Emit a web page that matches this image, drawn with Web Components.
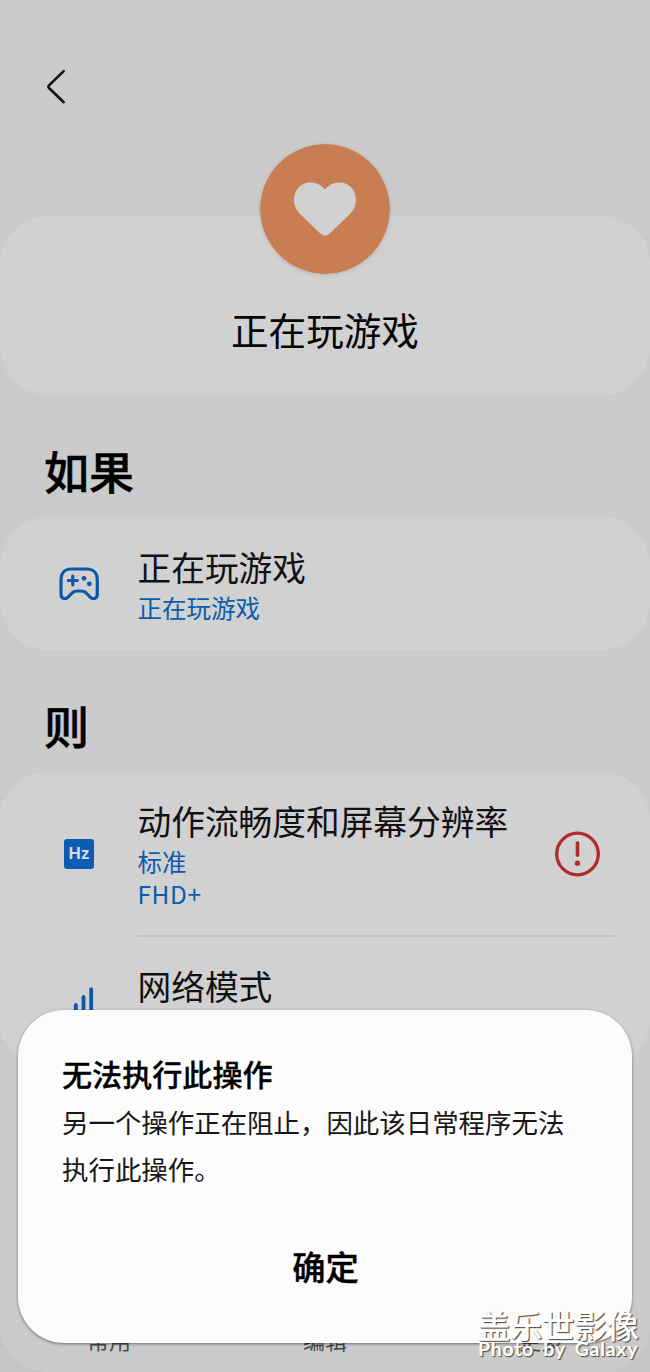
<!DOCTYPE html>
<html lang="zh-CN">
<head>
<meta charset="utf-8">
<title>日常程序</title>
<style>
html,body{margin:0;padding:0}
body{width:650px;height:1372px;overflow:hidden;background:#cbcbcb;color:#080808;font-family:"Noto Sans CJK SC",sans-serif}
</style>
</head>
<body>
<routine-screen></routine-screen>
<script>
const define = (name, html) => customElements.define(name, class extends HTMLElement {
  constructor() {
    super();
    this.attachShadow({ mode: 'open' }).innerHTML = html;
  }
});

define('back-bar', `<style>
:host{display:flex;align-items:center;height:174px;padding-left:45px;box-sizing:border-box}
svg{display:block}
</style><svg width="22" height="36" viewBox="0 0 22 36" fill="none" stroke="#111" stroke-width="2.6" stroke-linecap="round" stroke-linejoin="round"><path d="M18.7 2.1 4 16.4Q2.8 17.8 4 19L18.7 33.2"/></svg>`);

define('routine-hero', `<style>
:host{display:flex;flex-direction:column;align-items:center;height:179px;margin-top:42px;border-radius:48px;background:#d1d1d1}
svg{display:block;margin-top:-72px;border-radius:50%;box-shadow:0 1px 4px #0002;flex:none}
.name{margin-top:28px;font-size:37.6px;line-height:54px;color:#050505}
</style><svg width="130" height="130" viewBox="0 0 130 130"><circle cx="65" cy="65" r="65" fill="#c97d53"/><path d="M65 45.5C60 39.5 55.5 38.5 50.5 38.5C41 38.5 34 46 34 55.8C34 62 36.5 66.5 41 71L59.5 88.8Q65 94.5 70.5 88.8L89 71C93.5 66.5 96 62 96 55.8C96 46 89 38.5 79.5 38.5C74.5 38.5 70 39.5 65 45.5Z" fill="#d1d1d1"/></svg><div class="name"><slot></slot></div>`);

define('section-title', `<style>
:host{display:block;height:122px;padding:44px 0 0 44px;box-sizing:border-box;font-size:45px;line-height:64px;font-weight:500;color:#000;-webkit-text-stroke:.5px #000}
</style><slot></slot>`);

define('routine-card', `<style>
:host{display:block;background:#d1d1d1;border-radius:48px;overflow:hidden}
</style><slot></slot>`);

define('routine-item', `<style>
:host{display:grid;grid-template-columns:137.5px 1fr 95.5px;align-items:center;height:133px;box-sizing:border-box}
.icon{display:flex;padding-left:59px}
.copy{margin-top:-1px}
.title{font-size:33.7px;line-height:48px;color:#111;white-space:nowrap}
.sub{padding-top:1px;font-size:24.5px;line-height:31.5px;color:#0b5cad}
</style><div class="icon"><slot name="icon"></slot></div><div class="copy"><div class="title"><slot></slot></div><div class="sub"><slot name="sub"></slot></div></div><slot name="end"></slot>`);

define('item-divider', `<style>
:host{display:block;height:2px;margin:0 35px 0 137px;background:#bfbfbf}
</style>`);

define('gamepad-icon', `<style>:host,svg{display:block}</style><svg width="40" height="33" viewBox="0 0 40 33" fill="none" stroke="#0b58a8" stroke-width="3.2" stroke-linejoin="round" stroke-linecap="round"><path d="M12 2H28C34.5 2 38.3 6.5 38.3 13V27C38.3 32 33.7 33 30.8 29.8L28 26.7Q25.6 24 22 24H18.4Q14.7 24 12.3 26.7L9.5 29.8C6.6 33 2 32 2 27V13C2 6.5 5.5 2 12 2Z"/><path d="M9.3 13.5H18.3M13.8 9V18"/><g fill="#0b58a8" stroke="none"><circle cx="25" cy="11.3" r="2.4"/><circle cx="30.3" cy="16.8" r="2.4"/></g></svg>`);

define('hz-icon', `<style>
:host{display:flex;align-items:center;justify-content:center;width:30px;height:30px;margin-left:5px;border-radius:3px;background:#0a5cb5;color:#d9dde2;font:700 17px/30px "Liberation Sans",sans-serif}
</style><span>Hz</span>`);

define('signal-icon', `<style>:host{display:block;margin-left:7px}svg{display:block}</style><svg width="30" height="32" viewBox="0 0 30 32" fill="none" stroke="#0b58a8" stroke-width="3.8" stroke-linecap="round"><path d="M2 26V29M9.8 18V29M17.5 10V29M25.2 2.2V29"/></svg>`);

define('alert-icon', `<style>:host,svg{display:block}</style><svg width="46" height="46" viewBox="0 0 46 46" fill="none" stroke="#b02c2b"><circle cx="22.5" cy="23" r="20.8" stroke-width="3.3"/><path d="M22.5 12V24.2" stroke="#a82c2a" stroke-width="3.6" stroke-linecap="round"/><circle cx="22.5" cy="32.2" r="2.6" fill="#a82c2a" stroke="none"/></svg>`);

define('bottom-bar', `<style>
:host{display:grid;grid-template-columns:repeat(3,216px);justify-content:center;align-items:end;height:100px;box-sizing:border-box;padding-bottom:17px;font-size:22px;line-height:32px;color:#484848;text-align:center}
</style><span>常用</span><span>编辑</span><span>更多</span>`);

define('alert-dialog', `<style>
:host{position:absolute;left:18px;top:1009.5px;width:614px;height:333.5px;box-sizing:border-box;padding:41.5px 43px 0 44px;border-radius:46px;background:#fcfcfc;box-shadow:0 1px 3px #0007}
.title{font-size:30.1px;line-height:44px;font-weight:500;color:#000;-webkit-text-stroke:.3px #000}
.text{margin-top:3px;font-size:26.45px;line-height:47px;color:#171717}
.ok{display:block;width:100%;margin:47px 0 0;padding:0;border:0;background:none;font:500 33.3px/54px "Noto Sans CJK SC",sans-serif;color:#000;-webkit-text-stroke:.4px #000}
</style><div class="title">无法执行此操作</div><div class="text">另一个操作正在阻止，因此该日常程序无法<br>执行此操作。</div><button class="ok">确定</button>`);

define('photo-mark', `<style>
:host{position:absolute;left:478px;top:1305px;width:162px;color:#fff;text-shadow:1px 1px 1px #555,1px 1px 1px #888;white-space:nowrap}
.cn{font-size:32.2px;line-height:38px;font-weight:500}
.en{margin-top:-4px;font:700 19.5px/20px Lato,sans-serif;letter-spacing:.7px;word-spacing:4px}
</style><div class="cn">盖乐世影像</div><div class="en">Photo by Galaxy</div>`);

define('routine-screen', `<style>
:host{display:block;position:relative;width:650px;height:1372px;overflow:hidden;background:#c5c5c5}
main{display:flex;flex-direction:column;height:1372px;background:#cbcbcb;border-radius:0 0 48px 48px}
.then{height:296px}
.then routine-item:first-child{height:163px}
.then routine-item:last-child{height:131px}
.latin{letter-spacing:.6px}
bottom-bar{margin-top:auto}
</style><main>
<back-bar></back-bar>
<routine-hero>正在玩游戏</routine-hero>
<section-title>如果</section-title>
<routine-card><routine-item><gamepad-icon slot="icon"></gamepad-icon>正在玩游戏<span slot="sub">正在玩游戏</span></routine-item></routine-card>
<section-title>则</section-title>
<routine-card class="then"><routine-item><hz-icon slot="icon"></hz-icon>动作流畅度和屏幕分辨率<span slot="sub">标准<br><span class="latin">FHD+</span></span><alert-icon slot="end"></alert-icon></routine-item><item-divider></item-divider><routine-item><signal-icon slot="icon"></signal-icon>网络模式<span slot="sub">自动</span></routine-item></routine-card>
<bottom-bar></bottom-bar>
</main>
<alert-dialog></alert-dialog>
<photo-mark></photo-mark>`);
</script>
</body>
</html>
